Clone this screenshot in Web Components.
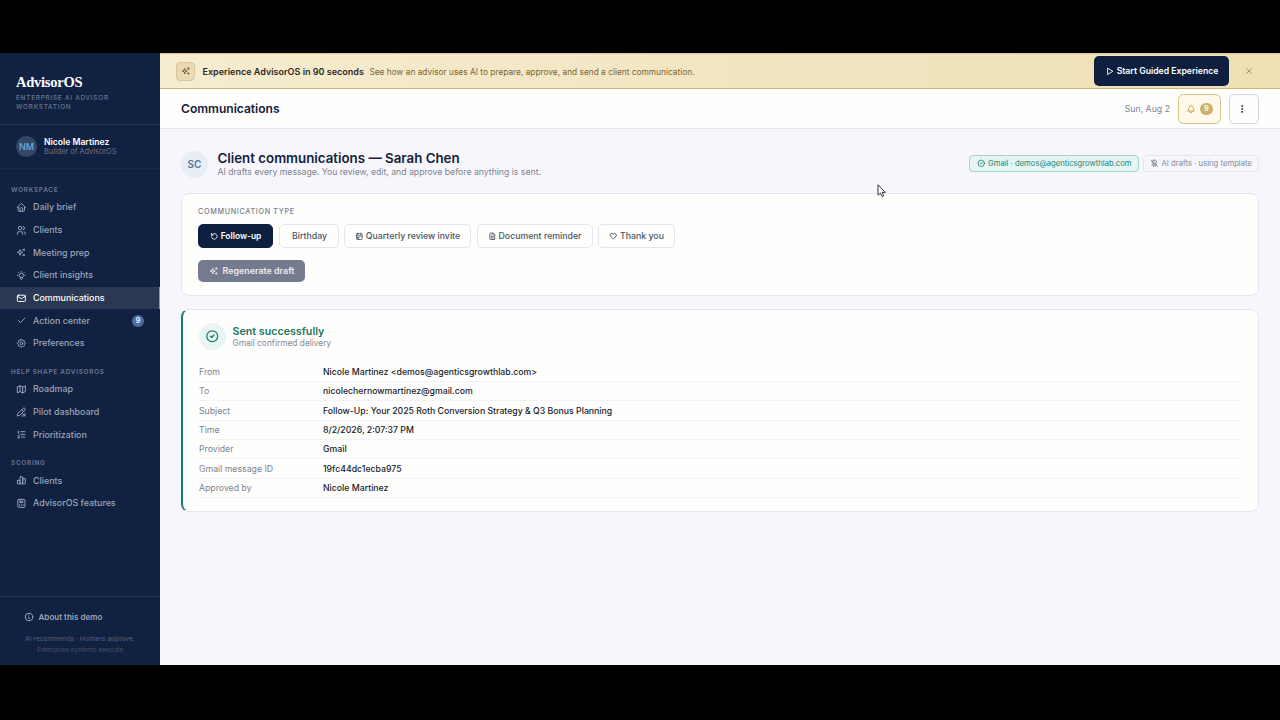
<!DOCTYPE html>
<html lang="en">
<head>
<meta charset="utf-8">
<title>AdvisorOS</title>
<style>
html, body {
	margin: 0;
	height: 100%;
	background: #000;
	overflow: hidden;
	font-family: Inter, "Liberation Sans", sans-serif;
}
</style>
</head>
<body>
<aos-app></aos-app>
<script>
const ICONS = {
	home: `<path d="M5 12H3l9-9 9 9h-2"/><path d="M5 12v7a2 2 0 0 0 2 2h10a2 2 0 0 0 2-2v-7"/><path d="M9 21v-6a2 2 0 0 1 2-2h2a2 2 0 0 1 2 2v6"/>`,
	users: `<circle cx="9" cy="7" r="4"/><path d="M3 21v-2a4 4 0 0 1 4-4h4a4 4 0 0 1 4 4v2"/><path d="M16 3.13a4 4 0 0 1 0 7.75"/><path d="M21 21v-2a4 4 0 0 0-3-3.85"/>`,
	sparkles: `<path d="M16 18a2 2 0 0 1 2 2a2 2 0 0 1 2-2a2 2 0 0 1-2-2a2 2 0 0 1-2 2zm0-12a2 2 0 0 1 2 2a2 2 0 0 1 2-2a2 2 0 0 1-2-2a2 2 0 0 1-2 2zM9 18a6 6 0 0 1 6-6a6 6 0 0 1-6-6a6 6 0 0 1-6 6a6 6 0 0 1 6 6z"/>`,
	bulb: `<path d="M3 12h1m8-9v1m8 8h1M5.6 5.6l.7.7m12.1-.7l-.7.7"/><path d="M9 16a5 5 0 1 1 6 0a3.5 3.5 0 0 0-1 3a2 2 0 0 1-4 0a3.5 3.5 0 0 0-1-3"/><path d="M9.7 17h4.6"/>`,
	mail: `<rect x="3" y="5" width="18" height="14" rx="2"/><path d="M3 7l9 6l9-6"/>`,
	check: `<path d="M5 12l5 5l10-10"/>`,
	settings: `<path d="M10.325 4.317c.426-1.756 2.924-1.756 3.35 0a1.724 1.724 0 0 0 2.573 1.066c1.543-.94 3.31.826 2.37 2.37a1.724 1.724 0 0 0 1.065 2.572c1.756.426 1.756 2.924 0 3.35a1.724 1.724 0 0 0-1.066 2.573c.94 1.543-.826 3.31-2.37 2.37a1.724 1.724 0 0 0-2.572 1.065c-.426 1.756-2.924 1.756-3.35 0a1.724 1.724 0 0 0-2.573-1.066c-1.543.94-3.31-.826-2.37-2.37a1.724 1.724 0 0 0-1.065-2.572c-1.756-.426-1.756-2.924 0-3.35a1.724 1.724 0 0 0 1.066-2.573c-.94-1.543.826-3.31 2.37-2.37c1 .608 2.296.07 2.572-1.065z"/><circle cx="12" cy="12" r="3"/>`,
	map: `<path d="M3 7l6-3l6 3l6-3v13l-6 3l-6-3l-6 3V7"/><path d="M9 4v13"/><path d="M15 7v13"/>`,
	pilot: `<path d="M4 20l4-1L20 7a2.8 2.8 0 0 0-4-4L4 15z"/><path d="M13 6l5 5"/><path d="M15 15l5 5"/><path d="M13 20h7v-5"/>`,
	list: `<path d="M11 6h9M11 12h9M12 18h8"/><path d="M4 16a2 2 0 1 1 4 0c0 .6-.5 1-1 1.5L4 20h4"/><path d="M6 10V4L4 6"/>`,
	chart: `<rect x="3" y="12" width="6" height="8" rx="1"/><rect x="9" y="4" width="6" height="16" rx="1"/><rect x="15" y="8" width="6" height="12" rx="1"/>`,
	calculator: `<rect x="4" y="3" width="16" height="18" rx="2"/><rect x="8" y="7" width="8" height="3" rx="1"/><path d="M8 14v.01M12 14v.01M16 14v.01M8 17v.01M12 17v.01M16 17v.01"/>`,
	info: `<circle cx="12" cy="12" r="9"/><path d="M12 8h.01"/><path d="M11 12h1v4h1"/>`,
	play: `<path d="M7 4v16l13-8z"/>`,
	close: `<path d="M18 6L6 18M6 6l12 12"/>`,
	bell: `<path d="M10 5a2 2 0 1 1 4 0a7 7 0 0 1 4 6v3a4 4 0 0 0 2 3H4a4 4 0 0 0 2-3v-3a7 7 0 0 1 4-6"/><path d="M9 17v1a3 3 0 0 0 6 0v-1"/>`,
	dots: `<circle cx="12" cy="12" r="1"/><circle cx="12" cy="19" r="1"/><circle cx="12" cy="5" r="1"/>`,
	circleCheck: `<circle cx="12" cy="12" r="9"/><path d="M9 12l2 2l4-4"/>`,
	robotOff: `<path d="M8 4h8a2 2 0 0 1 2 2v4a2 2 0 0 1-2 2H8a2 2 0 0 1-2-2V6"/><path d="M12 2v2M9 12v9M15 12v9M5 16l4-2M15 14l4 2M9 18h6M10 8v.01M14 8v.01M3 3l18 18"/>`,
	refresh: `<path d="M4 4v5h5"/><path d="M4.5 9a8 8 0 1 1-.5 5"/>`,
	calendar: `<rect x="4" y="5" width="16" height="16" rx="2"/><path d="M16 3v4M8 3v4M4 11h16M8 15h3v3H8z"/>`,
	file: `<path d="M14 3v4a1 1 0 0 0 1 1h4"/><path d="M17 21H7a2 2 0 0 1-2-2V5a2 2 0 0 1 2-2h7l5 5v11a2 2 0 0 1-2 2z"/><path d="M9 9h1M9 13h6M9 17h6"/>`,
	heart: `<path d="M19.5 12.572l-7.5 7.428l-7.5-7.428a5 5 0 1 1 7.5-6.566a5 5 0 1 1 7.5 6.572"/>`,
};

const define = (name, html) => {
	const tmpl = document.createElement("template");
	tmpl.innerHTML = html;

	window.customElements.define(name, class extends HTMLElement {
		constructor() {
			super();
			this.attachShadow({ mode: "open" });
			this.shadowRoot.appendChild(tmpl.content.cloneNode(true));
		}
	});
};

class AosIcon extends HTMLElement {
	connectedCallback() {
		if (this.shadowRoot) {
			return;
		}
		this.attachShadow({ mode: "open" });
		this.shadowRoot.innerHTML = /* html */`
		<style>
		:host {
			display: block;
			flex: none;
			width: var(--icon-size, 10px);
			height: var(--icon-size, 10px);
		}
		svg {
			display: block;
			width: 100%;
			height: 100%;
			fill: none;
			stroke: currentColor;
			stroke-width: var(--icon-stroke, 2.4);
			stroke-linecap: round;
			stroke-linejoin: round;
		}
		</style>
		<svg viewBox="0 0 24 24">${ICONS[this.getAttribute("name")]}</svg>`;
	}
}
window.customElements.define("aos-icon", AosIcon);

class AosNavItem extends HTMLElement {
	connectedCallback() {
		if (this.shadowRoot) {
			return;
		}
		const count = this.getAttribute("count");
		this.attachShadow({ mode: "open" });
		this.shadowRoot.innerHTML = /* html */`
		<style>
		:host {
			display: flex;
			align-items: center;
			box-sizing: border-box;
			height: 22.72px;
			padding: 0 16px 0 16px;
			gap: 6.3px;
			color: #9ca5b7;
			font-size: 8.9px;
			line-height: 12px;
			font-weight: 500;
			white-space: nowrap;
			--icon-size: 10.7px;
			--icon-stroke: 2.2;
		}
		:host([active]) {
			background: #2b3853;
			border-right: 1.5px solid #6f9fd8;
			color: #fff;
		}
		.label {
			flex: 1;
		}
		.count {
			width: 12px;
			height: 12px;
			border-radius: 50%;
			background: #4a6f9f;
			color: #fff;
			font-size: 7px;
			font-weight: 600;
			text-align: center;
		}
		</style>
		<aos-icon name="${this.getAttribute("icon")}"></aos-icon>
		<span class="label"><slot></slot></span>
		${count ? `<span class="count">${count}</span>` : ""}`;
	}
}
window.customElements.define("aos-nav-item", AosNavItem);

define("aos-nav-group", /* html */`
<style>
:host {
	display: block;
}
.title {
	height: 23.1px;
	box-sizing: border-box;
	padding: 12px 0 0 11px;
	color: #6c788f;
	font-size: 6.4px;
	line-height: 10px;
	font-weight: 600;
	letter-spacing: 0.74px;
	white-space: nowrap;
}
</style>
<div class="title"><slot name="title"></slot></div>
<slot></slot>
`);

define("aos-sidebar", /* html */`
<style>
:host {
	display: flex;
	flex-direction: column;
	width: 160px;
	flex: none;
	background: #112142;
	color: #fff;
}
.brand {
	height: 72px;
	box-sizing: border-box;
	border-bottom: 1px solid #263552;
	padding: 21px 0 0 16px;
}
.name {
	font: bold 14.5px/17px "Liberation Serif", serif;
	letter-spacing: -0.25px;
}
.tag {
	margin-top: 3px;
	color: #6c788f;
	font-size: 6.4px;
	line-height: 8.7px;
	font-weight: 500;
	letter-spacing: 0.76px;
}
.user {
	display: flex;
	align-items: center;
	gap: 7px;
	height: 44px;
	box-sizing: border-box;
	border-bottom: 1px solid #1a2a49;
	padding-left: 16px;
}
.avatar {
	width: 21px;
	height: 21px;
	border-radius: 50%;
	background: #334867;
	color: #75a9df;
	font-size: 9px;
	line-height: 21px;
	font-weight: 500;
	text-align: center;
}
.who {
	font-size: 8.6px;
	line-height: 10.5px;
	font-weight: 600;
}
.role {
	color: #69768d;
	font-size: 7.35px;
	line-height: 9px;
}
nav {
	flex: 1;
	padding-top: 3.7px;
}
footer {
	height: 69px;
	box-sizing: border-box;
	border-top: 1px solid #263552;
	padding-top: 14.4px;
	text-align: center;
}
.about {
	display: flex;
	align-items: center;
	gap: 5px;
	padding-left: 23.5px;
	color: #9ca5b7;
	font-size: 8.05px;
	line-height: 12px;
	font-weight: 600;
}
.note {
	margin-top: 10.7px;
	color: #53617a;
	font-size: 6.6px;
	line-height: 10.7px;
}
.note span {
	color: #43526d;
}
</style>
<div class="brand">
	<div class="name">AdvisorOS</div>
	<div class="tag">ENTERPRISE AI ADVISOR<br>WORKSTATION</div>
</div>
<div class="user">
	<div class="avatar">NM</div>
	<div>
		<div class="who">Nicole Martinez</div>
		<div class="role">Builder of AdvisorOS</div>
	</div>
</div>
<nav>
	<aos-nav-group>
		<span slot="title">WORKSPACE</span>
		<aos-nav-item icon="home">Daily brief</aos-nav-item>
		<aos-nav-item icon="users">Clients</aos-nav-item>
		<aos-nav-item icon="sparkles">Meeting prep</aos-nav-item>
		<aos-nav-item icon="bulb">Client insights</aos-nav-item>
		<aos-nav-item icon="mail" active>Communications</aos-nav-item>
		<aos-nav-item icon="check" count="9">Action center</aos-nav-item>
		<aos-nav-item icon="settings">Preferences</aos-nav-item>
	</aos-nav-group>
	<aos-nav-group>
		<span slot="title">HELP SHAPE ADVISOROS</span>
		<aos-nav-item icon="map">Roadmap</aos-nav-item>
		<aos-nav-item icon="pilot">Pilot dashboard</aos-nav-item>
		<aos-nav-item icon="list">Prioritization</aos-nav-item>
	</aos-nav-group>
	<aos-nav-group>
		<span slot="title">SCORING</span>
		<aos-nav-item icon="chart">Clients</aos-nav-item>
		<aos-nav-item icon="calculator">AdvisorOS features</aos-nav-item>
	</aos-nav-group>
</nav>
<footer>
	<div class="about"><aos-icon name="info"></aos-icon>About this demo</div>
	<div class="note">AI recommends · Humans approve.<br><span>Enterprise systems execute</span></div>
</footer>
`);

define("aos-banner", /* html */`
<style>
:host {
	display: flex;
	align-items: center;
	height: 36px;
	flex: none;
	box-sizing: border-box;
	border-top: 1px solid #dcc68f;
	border-bottom: 1px solid #cdb678;
	padding: 0 26px 0 16px;
	background: linear-gradient(90deg, #f6ecd0, #eedfb4);
	white-space: nowrap;
}
.mark {
	display: flex;
	align-items: center;
	justify-content: center;
	width: 19px;
	height: 19px;
	box-sizing: border-box;
	border: 1px solid #d9c69c;
	border-radius: 4px;
	background: #ead9b4;
	color: #7a6230;
	margin-right: 7.5px;
}
b {
	color: #2d2922;
	font-size: 9.03px;
	line-height: 12px;
	font-weight: 600;
	padding-top: 1px;
}
.text {
	flex: 1;
	margin-left: 5.5px;
	color: #7c6535;
	font-size: 8.33px;
	line-height: 12px;
	padding-top: 1px;
}
.start {
	display: flex;
	align-items: center;
	justify-content: center;
	gap: 3px;
	width: 135px;
	height: 30px;
	border-radius: 5px;
	background: #0e1f40;
	color: #fff;
	font-size: 8.66px;
	font-weight: 600;
	--icon-size: 9px;
	margin-right: 15px;
}
.close {
	color: #9b854f;
	--icon-stroke: 2;
}
</style>
<span class="mark"><aos-icon name="sparkles"></aos-icon></span>
<b>Experience AdvisorOS in 90 seconds</b>
<span class="text">See how an advisor uses AI to prepare, approve, and send a client communication.</span>
<span class="start"><aos-icon name="play"></aos-icon>Start Guided Experience</span>
<aos-icon class="close" name="close"></aos-icon>
`);

define("aos-topbar", /* html */`
<style>
:host {
	display: flex;
	align-items: center;
	height: 40px;
	flex: none;
	box-sizing: border-box;
	border-bottom: 1px solid #e5e6ee;
	padding: 0 21px;
	background: #fefefd;
}
h1 {
	flex: 1;
	margin: 0;
	color: #14213b;
	font-size: 12.05px;
	font-weight: 600;
}
.date {
	color: #7b8494;
	font-size: 8.75px;
	margin-right: 8px;
}
.btn {
	display: flex;
	align-items: center;
	justify-content: center;
	height: 30px;
	box-sizing: border-box;
	border: 1px solid #d3d5da;
	border-radius: 5.5px;
	color: #222;
}
.bell {
	width: 43px;
	gap: 4px;
	border-color: #d7c08a;
	background: #fef9ea;
	color: #cdab5f;
	margin-right: 8px;
}
.more {
	width: 30px;
	padding-right: 4px;
}
.count {
	width: 13px;
	height: 12px;
	border-radius: 6px;
	background: #ceb068;
	color: #fff;
	font-size: 7.5px;
	line-height: 12px;
	font-weight: 600;
	text-align: center;
}
</style>
<h1>Communications</h1>
<span class="date">Sun, Aug 2</span>
<span class="btn bell"><aos-icon name="bell"></aos-icon><span class="count">9</span></span>
<span class="btn more"><aos-icon name="dots"></aos-icon></span>
`);

define("aos-page-head", /* html */`
<style>
:host {
	display: flex;
	align-items: center;
	height: 28px;
}
.avatar {
	width: 27px;
	height: 27px;
	border-radius: 50%;
	background: #e8eff4;
	color: #52769d;
	font-size: 10px;
	line-height: 27px;
	font-weight: 600;
	text-align: center;
	margin-right: 9.5px;
}
.text {
	flex: 1;
}
h2 {
	margin: 0;
	color: #14213b;
	font-size: 13.3px;
	line-height: 15px;
	font-weight: 600;
}
p {
	margin: 0;
	color: #7d8491;
	font-size: 8.68px;
	line-height: 12px;
}
.chips {
	display: flex;
	gap: 4px;
	margin-bottom: 1.5px;
}
.chip {
	display: flex;
	align-items: center;
	justify-content: center;
	gap: 3px;
	width: 116px;
	height: 17px;
	box-sizing: border-box;
	border: 1px solid #e4e6ee;
	border-radius: 4px;
	color: #858c98;
	font-size: 7.7px;
	white-space: nowrap;
	--icon-size: 8.5px;
}
.ok {
	width: 170px;
	border-color: #a5d5cd;
	background: #e4f5f2;
	color: #2c8379;
	font-size: 7.66px;
}
</style>
<span class="avatar">SC</span>
<div class="text">
	<h2>Client communications — Sarah Chen</h2>
	<p>AI drafts every message. You review, edit, and approve before anything is sent.</p>
</div>
<div class="chips">
	<span class="chip ok"><aos-icon name="circleCheck"></aos-icon><span>Gmail · demos@agenticsgrowthlab.com</span></span>
	<span class="chip"><aos-icon name="robotOff"></aos-icon><span>AI drafts · using template</span></span>
</div>
`);

define("aos-card", /* html */`
<style>
:host {
	display: block;
	box-sizing: border-box;
	border: 1px solid #e6e6f0;
	border-radius: 8px;
	background: #fefefd;
}
</style>
<slot></slot>
`);

define("aos-type-button", /* html */`
<style>
:host {
	display: flex;
	align-items: center;
	justify-content: center;
	gap: 2.5px;
	height: 23.5px;
	box-sizing: border-box;
	border: 1px solid #e4e5ef;
	border-radius: 5px;
	color: #4a5363;
	font-size: 8.75px;
	font-weight: 500;
	white-space: nowrap;
	--icon-size: 8.5px;
}
:host([selected]) {
	border-color: #0e1f40;
	background: #0e1f40;
	color: #fff;
	font-size: 8.45px;
	font-weight: 600;
}
</style>
<slot></slot>
`);

define("aos-type-picker", /* html */`
<style>
:host {
	display: block;
	padding: 13px 16px 0;
}
.title {
	color: #747d8c;
	font-size: 7.2px;
	line-height: 10px;
	font-weight: 500;
	letter-spacing: 0.69px;
}
.types {
	display: flex;
	gap: 5.5px;
	margin-top: 7px;
}
.regen {
	display: flex;
	align-items: center;
	justify-content: center;
	gap: 4px;
	width: 107px;
	height: 22px;
	margin-top: 12.3px;
	border-radius: 5px;
	background: #747b8d;
	color: #e9ebef;
	font-size: 8.9px;
	font-weight: 600;
}
</style>
<div class="title">COMMUNICATION TYPE</div>
<div class="types">
	<aos-type-button selected style="width:75px"><aos-icon name="refresh"></aos-icon>Follow-up</aos-type-button>
	<aos-type-button style="width:60px;padding-left:2px">Birthday</aos-type-button>
	<aos-type-button style="width:127px"><aos-icon name="calendar"></aos-icon>Quarterly review invite</aos-type-button>
	<aos-type-button style="width:116px"><aos-icon name="file"></aos-icon>Document reminder</aos-type-button>
	<aos-type-button style="width:77px"><aos-icon name="heart"></aos-icon>Thank you</aos-type-button>
</div>
<div class="regen"><aos-icon name="sparkles"></aos-icon>Regenerate draft</div>
`);

class AosField extends HTMLElement {
	connectedCallback() {
		if (this.shadowRoot) {
			return;
		}
		this.attachShadow({ mode: "open" });
		this.shadowRoot.innerHTML = /* html */`
		<style>
		:host {
			display: flex;
			align-items: center;
			height: 19.35px;
			box-sizing: border-box;
			border-bottom: 1px solid #f3f3f6;
			font-size: 8.72px;
			line-height: 12px;
			white-space: nowrap;
		}
		.label {
			width: 124px;
			color: #7d8490;
		}
		.value {
			color: #161d2b;
			font-weight: 500;
		}
		</style>
		<span class="label">${this.getAttribute("label")}</span>
		<span class="value"><slot></slot></span>`;
	}
}
window.customElements.define("aos-field", AosField);

define("aos-receipt", /* html */`
<style>
:host {
	display: block;
	padding: 12px 18px 0 16px;
}
.head {
	display: flex;
	align-items: center;
	gap: 6.5px;
	height: 28px;
}
.mark {
	display: flex;
	align-items: center;
	justify-content: center;
	width: 27px;
	height: 27px;
	border-radius: 50%;
	background: #e9f5f4;
	color: #1f7b69;
	--icon-size: 14.5px;
	--icon-stroke: 2.1;
}
h3 {
	margin: 0;
	color: #22765f;
	font-size: 10.7px;
	line-height: 13px;
	font-weight: 600;
}
p {
	margin: 0;
	color: #838a95;
	font-size: 8.35px;
	line-height: 10px;
}
.fields {
	margin-top: 12.7px;
}
</style>
<div class="head">
	<span class="mark"><aos-icon name="circleCheck"></aos-icon></span>
	<div>
		<h3>Sent successfully</h3>
		<p>Gmail confirmed delivery</p>
	</div>
</div>
<div class="fields">
	<aos-field label="From">Nicole Martinez &lt;demos@agenticsgrowthlab.com&gt;</aos-field>
	<aos-field label="To">nicolechernowmartinez@gmail.com</aos-field>
	<aos-field label="Subject">Follow-Up: Your 2025 Roth Conversion Strategy &amp; Q3 Bonus Planning</aos-field>
	<aos-field label="Time">8/2/2026, 2:07:37 PM</aos-field>
	<aos-field label="Provider">Gmail</aos-field>
	<aos-field label="Gmail message ID">19fc44dc1ecba975</aos-field>
	<aos-field label="Approved by">Nicole Martinez</aos-field>
</div>
`);

define("aos-app", /* html */`
<style>
:host {
	display: flex;
	box-sizing: border-box;
	width: 1280px;
	height: 720px;
	padding: 53px 0 55px;
	background: #000;
}
main {
	display: flex;
	flex-direction: column;
	flex: 1;
	background: #f6f6fc;
}
.content {
	padding: 21px 21px 0;
}
.types {
	height: 103px;
	margin-top: 15px;
}
.sent {
	height: 203px;
	margin-top: 13px;
	border-left: 2px solid #1f7b69;
}
.pointer {
	position: absolute;
	left: 876.5px;
	top: 184px;
	width: 9px;
	height: 14px;
}
</style>
<aos-sidebar></aos-sidebar>
<main>
	<aos-banner></aos-banner>
	<aos-topbar></aos-topbar>
	<div class="content">
		<aos-page-head></aos-page-head>
		<aos-card class="types"><aos-type-picker></aos-type-picker></aos-card>
		<aos-card class="sent"><aos-receipt></aos-receipt></aos-card>
	</div>
</main>
<svg class="pointer" viewBox="0 0 9 14"><path d="M1 .8v10.4l2.4-2.2 1.6 3.6 1.7-.8-1.6-3.4h3.2z" fill="#fff" stroke="#1b2130" stroke-width=".9"/></svg>
`);
</script>
</body>
</html>
